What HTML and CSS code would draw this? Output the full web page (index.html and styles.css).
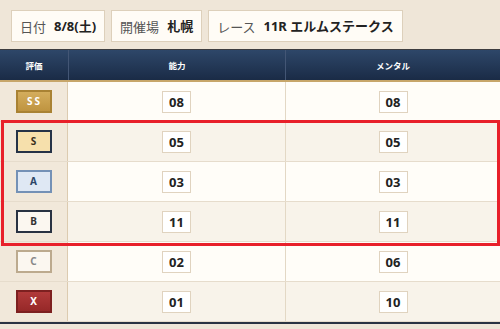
FILE: index.html
```html
<!DOCTYPE html>
<html lang="ja">
<head>
<meta charset="utf-8">
<link rel="stylesheet" href="styles.css">
</head>
<body>
<div class="topbar">
  <div class="info"><span class="lbl">日付</span><span class="val">8/8(土)</span></div>
  <div class="info"><span class="lbl">開催場</span><span class="val">札幌</span></div>
  <div class="info"><span class="lbl">レース</span><span class="val">11R エルムステークス</span></div>
</div>
<div class="table">
  <div class="head">
    <div class="hc">評価</div>
    <div class="hc">能力</div>
    <div class="hc">メンタル</div>
  </div>
  <div class="row odd">
    <div class="rank"><span class="badge b-ss">SS</span></div>
    <div class="cell"><span class="num">08</span></div>
    <div class="cell"><span class="num">08</span></div>
  </div>
  <div class="row even">
    <div class="rank"><span class="badge b-s">S</span></div>
    <div class="cell"><span class="num">05</span></div>
    <div class="cell"><span class="num">05</span></div>
  </div>
  <div class="row odd">
    <div class="rank"><span class="badge b-a">A</span></div>
    <div class="cell"><span class="num">03</span></div>
    <div class="cell"><span class="num">03</span></div>
  </div>
  <div class="row even">
    <div class="rank"><span class="badge b-b">B</span></div>
    <div class="cell"><span class="num">11</span></div>
    <div class="cell"><span class="num">11</span></div>
  </div>
  <div class="row odd">
    <div class="rank"><span class="badge b-c">C</span></div>
    <div class="cell"><span class="num">02</span></div>
    <div class="cell"><span class="num">06</span></div>
  </div>
  <div class="row even">
    <div class="rank"><span class="badge b-x">X</span></div>
    <div class="cell"><span class="num">01</span></div>
    <div class="cell"><span class="num">10</span></div>
  </div>
  <div class="highlight"></div>
</div>
</body>
</html>
```
FILE: styles.css
```css
* { box-sizing: border-box; }
html, body { margin: 0; padding: 0; }
body {
  width: 500px;
  height: 329px;
  background: #efe6d8;
  font-family: "Noto Sans", "Noto Sans CJK JP", sans-serif;
  color: #222;
  overflow: hidden;
}
.topbar {
  display: flex;
  gap: 6px;
  padding: 10px 11px 7px;
}
.info {
  height: 32px;
  display: flex;
  align-items: center;
  gap: 8px;
  padding: 0 8px;
  background: #fffcf6;
  border: 1px solid #ddd0bb;
  font-size: 13px;
  line-height: 1;
  white-space: nowrap;
}
.lbl { color: #555; font-family: "Noto Sans CJK JP", sans-serif; }
.val { color: #222; font-weight: bold; font-family: "Noto Sans", "Noto Sans CJK JP", sans-serif; }

.table {
  position: relative;
  border-top: 1px solid #3d3d3f;
  border-bottom: 2px solid #2a3342;
  background: #fffdf8;
}
.head {
  display: grid;
  grid-template-columns: 68px 217px 1fr;
  height: 32px;
  background: linear-gradient(#2e4769, #1a2b46);
  border-bottom: 2px solid #c7a66a;
}
.hc {
  display: flex;
  align-items: center;
  justify-content: center;
  color: #fff;
  font-size: 8.5px;
  font-weight: bold;
  font-family: "Noto Sans CJK JP", sans-serif;
}
.hc + .hc { border-left: 1px solid #435675; }

.row {
  display: grid;
  grid-template-columns: 68px 217px 1fr;
  height: 40px;
  border-bottom: 1px solid #e6dccc;
}
.row.odd { background: #fffdf8; }
.row.even { background: #f8f3ea; }
.rank {
  display: flex;
  align-items: center;
  justify-content: center;
  background: #f1e8da;
  border-right: 1px solid #dccbb0;
}
.cell {
  display: flex;
  align-items: center;
  justify-content: center;
}
.cell + .cell { border-left: 1px solid #e3d8c5; }
.num {
  width: 29px;
  height: 22px;
  display: flex;
  align-items: center;
  justify-content: center;
  background: #fff;
  border: 1px solid #e0d3bf;
  font-size: 13px;
  font-weight: bold;
  color: #222;
}
.badge {
  width: 36px;
  height: 23px;
  display: flex;
  align-items: center;
  justify-content: center;
  font-size: 10px;
  font-weight: bold;
  margin-top: -1px;
}
.b-ss {
  background: linear-gradient(#d4ad5c, #bf9440);
  border: 2px solid #a98233;
  color: #fff;
  letter-spacing: 2px;
  padding-left: 2px;
}
.b-s { background: #f6e0ac; border: 2px solid #253247; color: #3a3020; }
.b-a { background: #dfe8f4; border: 2px solid #7491b6; color: #2c4668; }
.b-b { background: #fbf7f0; border: 2px solid #283242; color: #333; }
.b-c { background: #fbf7f0; border: 2px solid #bcaa8e; color: #888; }
.b-x { background: linear-gradient(#b13a3a, #962828); border: 2px solid #7d2020; color: #fff; }

.highlight {
  position: absolute;
  left: 1px;
  right: 0;
  top: 70px;
  height: 126px;
  border: 3px solid #e8202a;
  pointer-events: none;
}
```
